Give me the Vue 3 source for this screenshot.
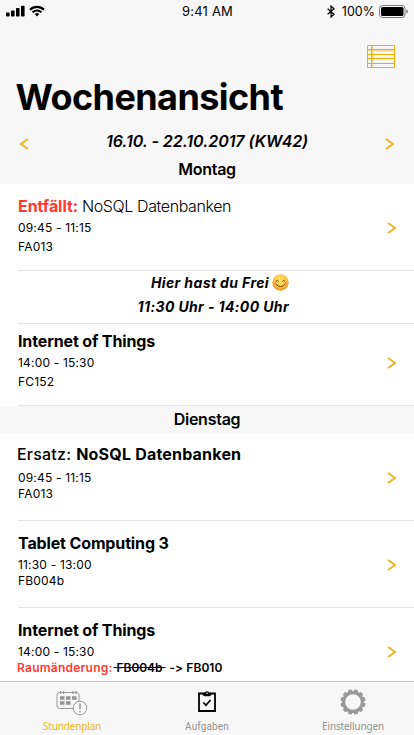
<script setup>
const days = [
  {
    name: 'Montag',
    entries: [
      { kind: 'first', prefix: 'Entfällt:', title: 'NoSQL Datenbanken', time: '09:45 - 11:15', room: 'FA013', cancelled: true },
      { kind: 'free', time: '11:30 Uhr - 14:00 Uhr' },
      { kind: 'short', title: 'Internet of Things', time: '14:00 - 15:30', room: 'FC152' },
    ],
  },
  {
    name: 'Dienstag',
    entries: [
      { kind: 'sub', prefix: 'Ersatz:', title: 'NoSQL Datenbanken', time: '09:45 - 11:15', room: 'FA013' },
      { kind: 'regular', title: 'Tablet Computing 3', time: '11:30 - 13:00', room: 'FB004b' },
      { kind: 'regular', title: 'Internet of Things', time: '14:00 - 15:30', oldRoom: 'FB004b', newRoom: 'FB010' },
    ],
  },
]
const teeth = Array.from({ length: 12 }, (_, i) => i * 30 + 15)
</script>

<template>
  <div class="screen">
    <header class="top">
      <div class="status">
        <div class="left">
          <svg class="signal" width="19" height="12" viewBox="0 0 19 12">
            <rect x="0" y="7.4" width="3.6" height="4.2" rx=".8" />
            <rect x="5" y="5.4" width="3.6" height="6.2" rx=".8" />
            <rect x="10" y="3" width="3.6" height="8.6" rx=".8" />
            <rect x="15" y=".8" width="3.6" height="10.8" rx=".8" />
          </svg>
          <svg width="16" height="12" viewBox="0 0 16 12" fill="none" stroke="#000">
            <path d="M1 4.7C5 .8 11 .8 15 4.7" stroke-width="2.2" />
            <path d="M3.5 7.3C6 4.9 10 4.9 12.500 7.300" stroke-width="2" />
            <path d="M5.700 9Q8 7.200 10.300 9L8 11.400Z" fill="#000" stroke="none" />
          </svg>
        </div>
        <span class="clock">9:41 AM</span>
        <div class="right">
          <svg class="bt" width="8" height="13" viewBox="0 0 8 13" fill="none" stroke="#000" stroke-width="1.2">
            <path d="M.6 3.700 7 9.300 4 12V1L7 3.700.6 9.300" />
          </svg>
          <span class="percent">100%</span>
          <svg width="30" height="13" viewBox="0 0 30 13">
            <rect x=".5" y=".5" width="25.500" height="12" rx="3" fill="#fff" stroke="#777" />
            <rect x="2" y="2" width="22.500" height="9" rx="1.500" />
            <path d="M27.300 4.500Q29 5 29 6.500T27.300 8.500Z" fill="#777" />
          </svg>
        </div>
      </div>
      <svg class="list-icon" width="28" height="24" viewBox="0 0 28 24" fill="none" stroke="#f0ad00">
        <path d="M1 5.400H27M5.500 1V23" stroke="#f6d88c" stroke-width="1.500" />
        <path d="M.5 .5H27.500V22.500H.5ZM.5 4.500H27.500M.5 9.500H27.500M.5 13.500H27.500M.5 18.500H27.500M4.500 .5V22.500" />
      </svg>
      <h1>Wochenansicht</h1>
      <div class="week">
        <svg class="chev" viewBox="0 0 10 12"><path d="M9 1 2 6 9 11" /></svg>
        <span>16.10. - 22.10.2017 (KW42)</span>
        <svg class="chev" viewBox="0 0 10 12"><path d="M1 1 8 6 1 11" /></svg>
      </div>
    </header>
    <main>
      <section v-for="day in days" :key="day.name">
        <h2>{{ day.name }}</h2>
        <article v-for="(e, i) in day.entries" :key="i" :class="e.kind">
          <template v-if="e.kind === 'free'">
            <p class="free-title">
              <span>Hier hast du Frei</span>
              <svg width="17" height="17" viewBox="0 0 17 17">
                <defs>
                  <radialGradient id="face" cx=".5" cy=".4" r=".6">
                    <stop offset="0" stop-color="#ffe36a" /><stop offset=".6" stop-color="#fdc943" /><stop offset="1" stop-color="#f08c1c" />
                  </radialGradient>
                </defs>
                <circle cx="8.500" cy="8.500" r="8.200" fill="url(#face)" />
                <g fill="none" stroke="#704018" stroke-linecap="round">
                  <path d="M4 7.300Q5.300 5 6.600 7.300M10.400 7.300Q11.700 5 13 7.300M4.300 10.600Q8.500 15 12.700 10.600" />
                </g>
                <g fill="#f48b55" opacity=".7"><circle cx="3.300" cy="9.300" r="1.600" /><circle cx="13.700" cy="9.300" r="1.600" /></g>
              </svg>
            </p>
            <p class="free-time">{{ e.time }}</p>
          </template>
          <template v-else>
            <div class="info">
              <h3 :class="{ cancelled: e.cancelled }">
                <span v-if="e.prefix" class="prefix">{{ e.prefix }}</span>
                <span>{{ e.title }}</span>
              </h3>
              <p class="time">{{ e.time }}</p>
              <p v-if="e.room" class="room">{{ e.room }}</p>
              <p v-else class="change">
                <span class="label">Raumänderung:</span>
                <s>&nbsp;{{ e.oldRoom }}&nbsp;</s>
                <span class="new">-&gt; {{ e.newRoom }}</span>
              </p>
            </div>
            <svg class="chev" viewBox="0 0 10 12"><path d="M1 1 8 6 1 11" /></svg>
          </template>
        </article>
      </section>
    </main>
    <nav>
      <div class="tab plan">
        <svg width="32" height="25" viewBox="0 0 32 25" fill="none" stroke="#999">
          <rect x="1" y="1.500" width="22" height="16" rx="2.500" />
          <path d="M4.500 0V3M7.500 0V3M17 0V3M20 0V3" stroke-width="1.300" />
          <path d="M4 7H8.500M10 7H14.500M16 7H20.500M4 12H8.500M10 12H14.500" stroke-width="3.600" stroke="#929292" />
          <circle cx="24" cy="17" r="6.800" fill="#f7f7f7" />
          <path d="M24 12.500V18.500M24 20V21.500" stroke-width="1.500" />
        </svg>
        <span>Stundenplan</span>
      </div>
      <div class="tab tasks">
        <svg width="18" height="21" viewBox="0 0 18 21" fill="none" stroke="#000">
          <path d="M1 2.500H17V20H1Z" stroke-width="1.800" />
          <path d="M4.500 4V2H6.500Q7 .3 9 .3T11.500 2H13.500V4L11.500 5.300H6.500Z" fill="#000" stroke="none" />
          <circle cx="9" cy="2.200" r=".8" fill="#fff" stroke="none" />
          <path d="M5.300 11.500 8 14.200 12.500 9" stroke-width="1.700" />
        </svg>
        <span>Aufgaben</span>
      </div>
      <div class="tab settings">
        <svg width="26" height="26" viewBox="-13 -13 26 26">
          <circle r="9.400" fill="none" stroke="#999" stroke-width="3.200" />
          <rect v-for="a in teeth" :key="a" x="-2.100" y="-12.600" width="4.200" height="4" rx="1" fill="#999" :transform="`rotate(${a})`" />
        </svg>
        <span>Einstellungen</span>
      </div>
    </nav>
  </div>
</template>

<style>
body { margin: 0; overflow: hidden; }
</style>

<style scoped>
* { box-sizing: border-box; }
h1, h2, h3, p { margin: 0; }
svg { flex: none; display: block; }
.screen { width: 414px; height: 735px; display: flex; flex-direction: column; overflow: hidden; background: #fff; color: #000; font-family: Inter, "Liberation Sans", sans-serif; white-space: nowrap; }
.top { flex: none; height: 156px; background: #f7f7f7; display: flex; flex-direction: column; }
.status { height: 22px; padding: 0 5px 0 6px; display: grid; grid-template-columns: 1fr auto 1fr; align-items: center; }
.left, .right { display: flex; align-items: center; }
.left { gap: 4px; }
.right { justify-content: flex-end; }
.clock { font-size: 13px; letter-spacing: .2px; }
.percent { font-size: 12.500px; margin: 0 4px 0 7px; }
.list-icon { align-self: flex-end; margin: 23px 19px 0 0; }
h1 { font-size: 36px; line-height: 44px; margin: 6px 0 0 15.500px; font-weight: 700; letter-spacing: -.58px; }
.week { height: 20px; margin-top: 12px; padding: 0 19px; display: flex; justify-content: space-between; align-items: center; font-size: 16px; font-style: italic; font-weight: 600; line-height: 20px; letter-spacing: -.04px; }
.week .chev { margin-top: 5px; }
.chev { width: 10px; height: 12px; fill: none; stroke: #ebb421; stroke-width: 1.900; }
article .chev { margin-top: 2px; }
main { flex: 1; min-height: 0; overflow: hidden; }
h2 { height: 28px; background: #f7f7f7; text-align: center; font-size: 16px; line-height: 27px; font-weight: 600; letter-spacing: -.25px; }
article { display: flex; justify-content: space-between; align-items: center; height: 87px; margin-left: 18px; padding-right: 17px; border-bottom: 1px solid #e4e4e4; }
.info { align-self: flex-start; padding-top: 12px; }
.short { height: 82px; }
.short .info { padding-top: 7px; }
.short .chev { margin-bottom: 5px; }
.sub .info { padding-top: 10px; }
h3 { display: flex; gap: 5px; font-size: 16px; line-height: 20px; font-weight: 700; letter-spacing: -.13px; }
h3.cancelled { font-weight: 350; letter-spacing: -.4px; gap: 4px; }
.cancelled .prefix { color: #ff3b30; font-weight: 700; letter-spacing: -.05px; }
.sub h3 { letter-spacing: .2px; margin-left: -1px; }
.sub .prefix { font-weight: 500; }
.time, .room { font-size: 12px; line-height: 16px; letter-spacing: .18px; }
.time { margin-top: 4px; }
.sub .time { margin-top: 6px; }
.first .room, .short .room { margin-top: 3px; }
.change { display: flex; margin-left: -1px; font-size: 12px; line-height: 16px; font-weight: 600; font-feature-settings: "calt" 0; }
.change .label { color: #ff3b30; letter-spacing: .24px; margin-right: 1px; }
.change s { letter-spacing: -.05px; margin-right: 4px; }
.change .new { letter-spacing: .05px; }
.free { height: 53px; display: block; font-size: 14px; font-style: italic; font-weight: 700; padding: 1px 125px 0 0; }
.free p { line-height: 22px; letter-spacing: .38px; }
.free-title { display: flex; justify-content: flex-end; align-items: center; gap: 3px; }
.free-title svg { margin-bottom: 2px; }
.free-time { text-align: right; margin-top: 2px; }
nav { height: 54px; flex: none; border-top: 1px solid #c9c9c9; background: #f7f7f7; display: grid; grid-template-columns: 144px 126px 144px; }
.tab { display: flex; flex-direction: column; align-items: center; color: #929292; font-family: "Noto Sans", sans-serif; font-size: 10px; line-height: 14px; letter-spacing: -.15px; }
.tab span { margin-top: auto; margin-bottom: 2px; }
.plan { color: #ebb421; }
.plan svg { margin-top: 9px; }
.tasks svg { margin-top: 9px; }
.tab.tasks span { font-family: Roboto, sans-serif; letter-spacing: .12px; margin-bottom: 1px; }
.settings { padding-left: 22px; }
.settings svg { margin-top: 7px; }
</style>
